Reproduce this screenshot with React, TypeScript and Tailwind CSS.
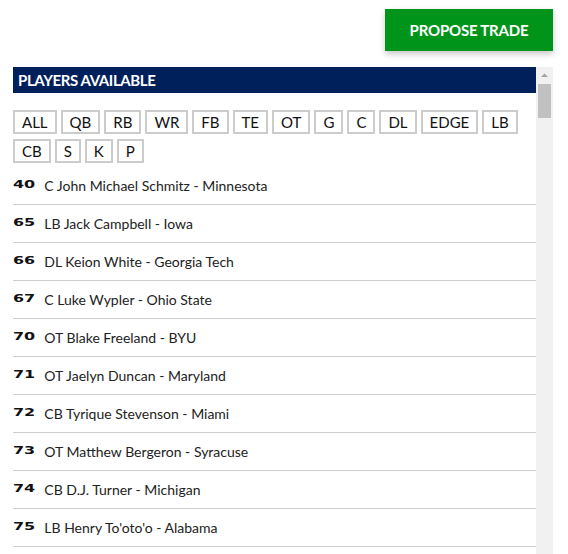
import React from "react";

const positions = ["ALL", "QB", "RB", "WR", "FB", "TE", "OT", "G", "C", "DL", "EDGE", "LB", "CB", "S", "K", "P"];

const players = [
  { pick: "40", name: "C John Michael Schmitz - Minnesota" },
  { pick: "65", name: "LB Jack Campbell - Iowa" },
  { pick: "66", name: "DL Keion White - Georgia Tech" },
  { pick: "67", name: "C Luke Wypler - Ohio State" },
  { pick: "70", name: "OT Blake Freeland - BYU" },
  { pick: "71", name: "OT Jaelyn Duncan - Maryland" },
  { pick: "72", name: "CB Tyrique Stevenson - Miami" },
  { pick: "73", name: "OT Matthew Bergeron - Syracuse" },
  { pick: "74", name: "CB D.J. Turner - Michigan" },
  { pick: "75", name: "LB Henry To'oto'o - Alabama" },
];

export default function App() {
  return (
    <div className="h-[554px] w-[568px] overflow-hidden bg-white pl-[13px] pr-[15px] pt-[9px] font-['Lato','Liberation_Sans',sans-serif]">
      <div className="flex justify-end">
        <button className="h-[42px] w-[168px] bg-[#00951a] text-[15px] font-bold tracking-[-0.2px] text-white shadow-[0_3px_6px_rgba(0,0,0,0.22)]">
          PROPOSE TRADE
        </button>
      </div>

      <div className="mt-[16px] flex">
        <div className="w-[523px]">
          <div className="flex h-[26px] items-center bg-[#00205b] pl-[5px] text-[15px] font-bold tracking-[-0.4px] text-white">
            PLAYERS AVAILABLE
          </div>

          <div className="mt-[17px] flex flex-wrap gap-x-[4px] gap-y-[5px]">
            {positions.map((p) => (
              <button
                key={p}
                className="h-[24px] border-2 border-[#cccccc] bg-white px-[7px] text-[15px] leading-none text-[#111]"
              >
                {p}
              </button>
            ))}
          </div>

          <ul className="mt-[4px]">
            {players.map((pl) => (
              <li key={pl.pick} className="flex h-[38px] items-center border-b border-[#cccccc] text-[14px] text-[#222]">
                <span className="mr-[16px] inline-block origin-left scale-x-[1.45] font-['DejaVu_Sans',sans-serif] text-[11px] font-bold text-[#111]">
                  {pl.pick}
                </span>
                <span>{pl.name}</span>
              </li>
            ))}
          </ul>
        </div>

        <div className="flex h-[500px] w-[17px] flex-col items-center bg-[#f1f1f1]">
          <svg width="17" height="17" viewBox="0 0 17 17" className="shrink-0">
            <path d="M5 10 L8.5 6.5 L12 10 Z" fill="#a3a3a3" />
          </svg>
          <div className="h-[34px] w-[13px] bg-[#c1c1c1]" />
        </div>
      </div>
    </div>
  );
}
